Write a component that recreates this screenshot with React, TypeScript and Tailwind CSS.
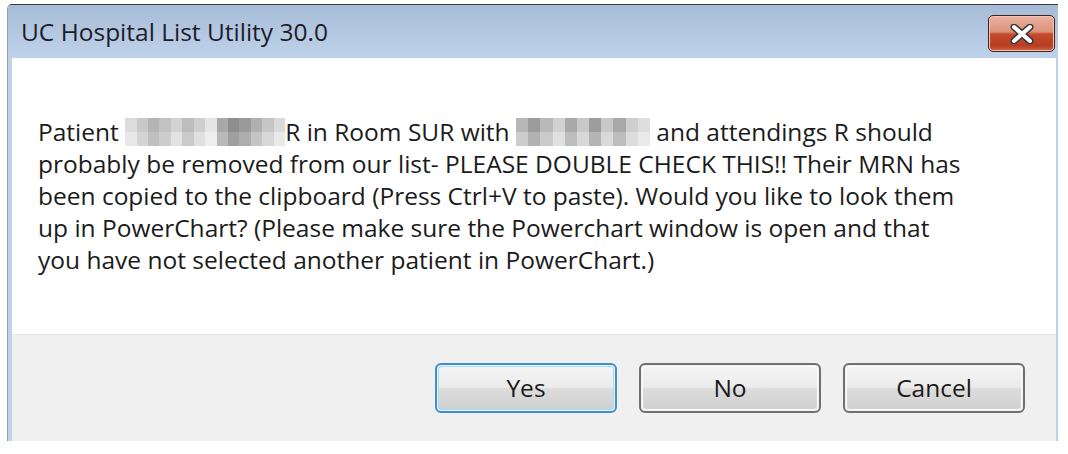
import React from "react";

const blur1 = ["#dcdcdc","#c9c9c9","#b4b4b4","#c2c2c2","#d3d3d3","#bdbdbd","#cfcfcf","#e4e4e4","#a8a8a8","#8e8e8e","#9a9a9a","#b0b0b0","#c6c6c6","#dadada"];
const blur1b = ["#e8e8e8","#d4d4d4","#bfbfbf","#cdcdcd","#e2e2e2","#cacaca","#dfdfdf","#eeeeee","#b9b9b9","#9f9f9f","#adadad","#c4c4c4","#d7d7d7","#e9e9e9"];
const blur2 = ["#b7b7b7","#9c9c9c","#b9b9b9","#d2d2d2","#a9a9a9","#c9c9c9","#9d9d9d","#c8c8c8","#a8a8a8","#cfcfcf","#dedede"];
const blur2b = ["#cdcdcd","#b2b2b2","#cbcbcb","#e0e0e0","#bdbdbd","#d8d8d8","#b4b4b4","#d9d9d9","#bdbdbd","#dddddd","#eaeaea"];

function Blur({ top, bottom, width }: { top: string[]; bottom: string[]; width: number }) {
  return (
    <span
      className="inline-block align-top h-[28px] translate-y-[2px] overflow-hidden"
      style={{ width }}
    >
      <span className="flex h-[14px]">
        {top.map((c, i) => (
          <span key={i} className="flex-1 h-full" style={{ background: c }} />
        ))}
      </span>
      <span className="flex h-[14px]">
        {bottom.map((c, i) => (
          <span key={i} className="flex-1 h-full" style={{ background: c }} />
        ))}
      </span>
    </span>
  );
}

function Btn({ label, def }: { label: string; def?: boolean }) {
  return (
    <div
      className={
        "w-[182px] h-[50px] rounded-[6px] border-2 p-[1px] " +
        (def ? "border-[#3c8fd2]" : "border-[#707070]")
      }
    >
      <div
        className={
          "w-full h-full rounded-[4px] flex items-center justify-center text-[24.5px] leading-none text-[#1a1a1a] bg-[linear-gradient(to_bottom,#f4f4f4_0%,#ececec_48%,#dcdcdc_52%,#d0d0d0_100%)] " +
          (def ? "shadow-[inset_0_0_0_1px_#a7dcf7]" : "shadow-[inset_0_0_0_1px_#fbfbfb]")
        }
      >
        {label}
      </div>
    </div>
  );
}

export default function App() {
  return (
    <div
      className="w-[1068px] h-[454px] bg-white overflow-hidden"
      style={{ fontFamily: '"Open Sans", "Noto Sans", sans-serif' }}
    >
      <div className="ml-[7px] mt-[4px] w-[1051px] h-[437px] flex flex-col border-t border-l border-t-[#3a3a3a] border-l-[#9c9c9c] rounded-tl-[5px] overflow-hidden">
        {/* title bar */}
        <div className="h-[53px] flex items-start justify-between pr-[3px] bg-[linear-gradient(to_bottom,#a6bbd5_0%,#b3c7e0_50%,#bed2ea_100%)]">
          <div className="pl-[13px] pt-[13px] text-[24.5px] leading-[28px] text-[#1d1d2a] whitespace-nowrap">
            UC Hospital List Utility 30.0
          </div>
          <div className="mt-[10px] w-[67px] h-[37px] rounded-[5px] border border-[#3f2222] flex items-center justify-center bg-[linear-gradient(to_bottom,#eab3a0_0%,#dc917a_45%,#c44a2c_52%,#b83e22_85%,#cc6448_100%)] shadow-[inset_0_0_0_1px_#f1c4b4]">
            <svg width="28" height="20" viewBox="0 0 28 20">
              <path d="M6 3 L22 17 M22 3 L6 17" stroke="#3a3a3a" strokeWidth="7" strokeLinecap="round" />
              <path d="M6 3 L22 17 M22 3 L6 17" stroke="#ffffff" strokeWidth="4" strokeLinecap="round" />
            </svg>
          </div>
        </div>
        {/* body */}
        <div className="flex-1 flex flex-col border-l-4 border-r-2 border-[#bed2ea]">
          <div className="h-[276px] bg-white pl-[26px] pt-[58px] text-[24.5px] leading-[32px] text-[#1b1b1b]">
            <div className="whitespace-nowrap h-[32px]">
              Patient{" "}
              <Blur top={blur1} bottom={blur1b} width={160} />
              R in Room SUR with{" "}
              <Blur top={blur2} bottom={blur2b} width={134} /> and attendings R should
            </div>
            <div className="whitespace-nowrap h-[32px]">
              probably be removed from our list- PLEASE DOUBLE CHECK THIS!! Their MRN has
            </div>
            <div className="whitespace-nowrap h-[32px]">
              been copied to the clipboard (Press Ctrl+V to paste). Would you like to look them
            </div>
            <div className="whitespace-nowrap h-[32px]">
              up in PowerChart? (Please make sure the Powerchart window is open and that
            </div>
            <div className="whitespace-nowrap h-[32px]">
              you have not selected another patient in PowerChart.)
            </div>
          </div>
          <div className="flex-1 bg-[#f0f0f0] border-t border-[#e4e4e4] flex justify-end items-start gap-[22px] pr-[31px] pt-[28px]">
            <Btn label="Yes" def />
            <Btn label="No" />
            <Btn label="Cancel" />
          </div>
        </div>
      </div>
    </div>
  );
}
